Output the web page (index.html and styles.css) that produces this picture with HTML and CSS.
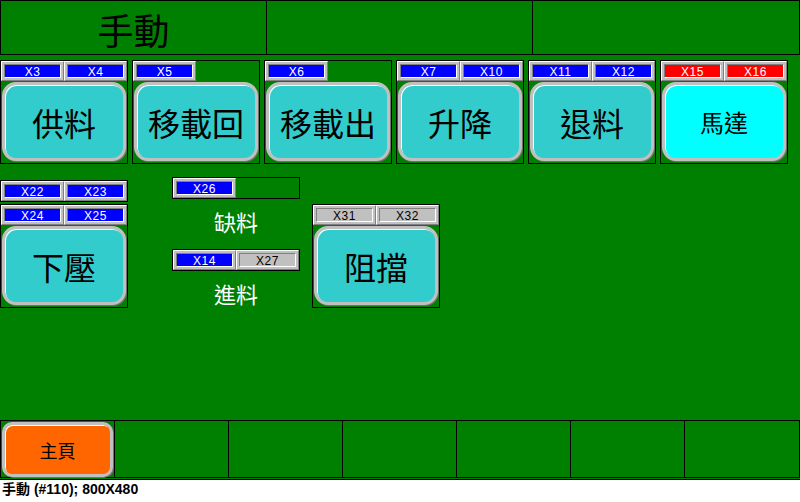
FILE: index.html
```html
<!DOCTYPE html>
<html>
<head>
<meta charset="utf-8">
<link rel="stylesheet" href="styles.css">
</head>
<body>
<div class="screen">
  <div class="header">
    <div class="hcell hcell-first"><span class="title">手動</span></div>
    <div class="hcell"></div>
    <div class="hcell hcell-last"></div>
  </div>

  <div class="row1">
    <div class="group">
      <div class="inds"><div class="ind"><div class="ind-in on">X3</div></div><div class="ind"><div class="ind-in on">X4</div></div></div>
      <div class="btn">供料</div>
    </div>
    <div class="group">
      <div class="inds"><div class="ind"><div class="ind-in on">X5</div></div></div>
      <div class="btn">移載回</div>
    </div>
    <div class="group">
      <div class="inds"><div class="ind"><div class="ind-in on">X6</div></div></div>
      <div class="btn">移載出</div>
    </div>
    <div class="group">
      <div class="inds"><div class="ind"><div class="ind-in on">X7</div></div><div class="ind"><div class="ind-in on">X10</div></div></div>
      <div class="btn">升降</div>
    </div>
    <div class="group">
      <div class="inds"><div class="ind"><div class="ind-in on">X11</div></div><div class="ind"><div class="ind-in on">X12</div></div></div>
      <div class="btn">退料</div>
    </div>
    <div class="group">
      <div class="inds"><div class="ind"><div class="ind-in red">X15</div></div><div class="ind"><div class="ind-in red">X16</div></div></div>
      <div class="btn btn-cyan">馬達</div>
    </div>
  </div>

  <div class="row2">
    <div class="col col1">
      <div class="group group-short">
        <div class="inds"><div class="ind"><div class="ind-in on">X22</div></div><div class="ind"><div class="ind-in on">X23</div></div></div>
      </div>
      <div class="group group-b">
        <div class="inds"><div class="ind"><div class="ind-in on">X24</div></div><div class="ind"><div class="ind-in on">X25</div></div></div>
        <div class="btn">下壓</div>
      </div>
    </div>
    <div class="col col2">
      <div class="group group-short">
        <div class="inds"><div class="ind"><div class="ind-in on">X26</div></div></div>
      </div>
      <div class="label label-1">缺料</div>
      <div class="group group-short">
        <div class="inds"><div class="ind"><div class="ind-in on">X14</div></div><div class="ind"><div class="ind-in off">X27</div></div></div>
      </div>
      <div class="label label-2">進料</div>
    </div>
    <div class="col col3">
      <div class="group">
        <div class="inds"><div class="ind"><div class="ind-in off">X31</div></div><div class="ind"><div class="ind-in off">X32</div></div></div>
        <div class="btn">阻擋</div>
      </div>
    </div>
  </div>

  <div class="bottombar">
    <div class="bcell bcell-first"><div class="btn btn-home">主頁</div></div>
    <div class="bcell"></div>
    <div class="bcell"></div>
    <div class="bcell"></div>
    <div class="bcell"></div>
    <div class="bcell"></div>
    <div class="bcell bcell-last"></div>
  </div>
</div>
<div class="status">手動 (#110); 800X480</div>
</body>
</html>
```

FILE: styles.css
```css
* { box-sizing: border-box; }

body {
  margin: 0;
  background: #fff;
  font-family: "Noto Sans CJK TC", "Liberation Sans", sans-serif;
}

.screen {
  width: 800px;
  height: 480px;
  background: #008000;
  border-bottom: 1px solid #000;
  display: flex;
  flex-direction: column;
}

/* header */
.header {
  display: flex;
  height: 55px;
  border: 1px solid #000;
}
.hcell {
  width: 266px;
  border-left: 1px solid #000;
  display: flex;
  align-items: center;
  justify-content: center;
}
.hcell-first { width: 265px; border-left: none; }
.hcell-last { flex: 1; }
.title {
  font-size: 36px;
  line-height: 1;
  color: #000;
  margin-top: 3px;
}

/* groups */
.row1 {
  display: flex;
  gap: 4px;
  margin-top: 5px;
}
.group {
  width: 128px;
  height: 104px;
  border: 1px solid #000;
  display: flex;
  flex-direction: column;
}
.group-short { height: 22px; }

.inds {
  display: flex;
  height: 20px;
}
.ind {
  width: 63px;
  height: 20px;
  padding: 2px;
  background: #c0c0c0;
  border: 1px solid;
  border-color: #fff #808080 #808080 #fff;
}
.ind-in {
  height: 100%;
  padding-top: 1px;
  border: 1px solid;
  border-color: #808080 #fff #fff #808080;
  font-family: "Liberation Sans", sans-serif;
  font-size: 12px;
  line-height: 12px;
  text-align: center;
  letter-spacing: 0.5px;
}
.on { background: #0000ff; color: #fff; }
.red { background: #ff0000; color: #fff; }
.off { background: #c0c0c0; color: #000; }

.btn {
  height: 79px;
  margin: 1px 1px 0;
  border: 3px solid #c0c0c0;
  border-radius: 14px;
  background: #33cccc;
  box-shadow: inset 1px 1px 0 #fff, 1px 1px 0 #707070;
  display: flex;
  align-items: center;
  justify-content: center;
  font-size: 32px;
  color: #000;
  line-height: 1;
}
.btn-cyan {
  background: #00ffff;
  font-size: 24px;
}

/* second section */
.row2 {
  display: flex;
  align-items: flex-start;
  margin-top: 13px;
}
.col { display: flex; flex-direction: column; }
.col1 { width: 128px; padding-top: 3px; }
.group-b { margin-top: 2px; }
.col2 { width: 128px; margin-left: 44px; }
.col3 { width: 128px; margin-left: 12px; padding-top: 27px; }

.label {
  color: #fff;
  font-size: 22px;
  text-align: center;
}
.label-1 { height: 42px; line-height: 42px; margin-bottom: 7px; margin-top: 1px; }
.label-2 { height: 45px; line-height: 45px; }

/* bottom bar */
.bottombar {
  margin-top: auto;
  margin-bottom: 1px;
  height: 58px;
  border: 1px solid #000;
  display: flex;
}
.bcell {
  width: 114px;
  border-left: 1px solid #000;
}
.bcell-first { width: 113px; border-left: none; }
.bcell-last { flex: 1; }
.btn-home {
  height: 55px;
  width: 111px;
  margin: 1px 0 0 1px;
  background: #ff6600;
  border-radius: 10px;
  font-size: 18px;
}

.status {
  font-family: "Liberation Sans", "Noto Sans CJK TC", sans-serif;
  font-weight: bold;
  font-size: 14px;
  line-height: 16px;
  padding: 1px 0 0 2px;
  color: #000;
}
```
